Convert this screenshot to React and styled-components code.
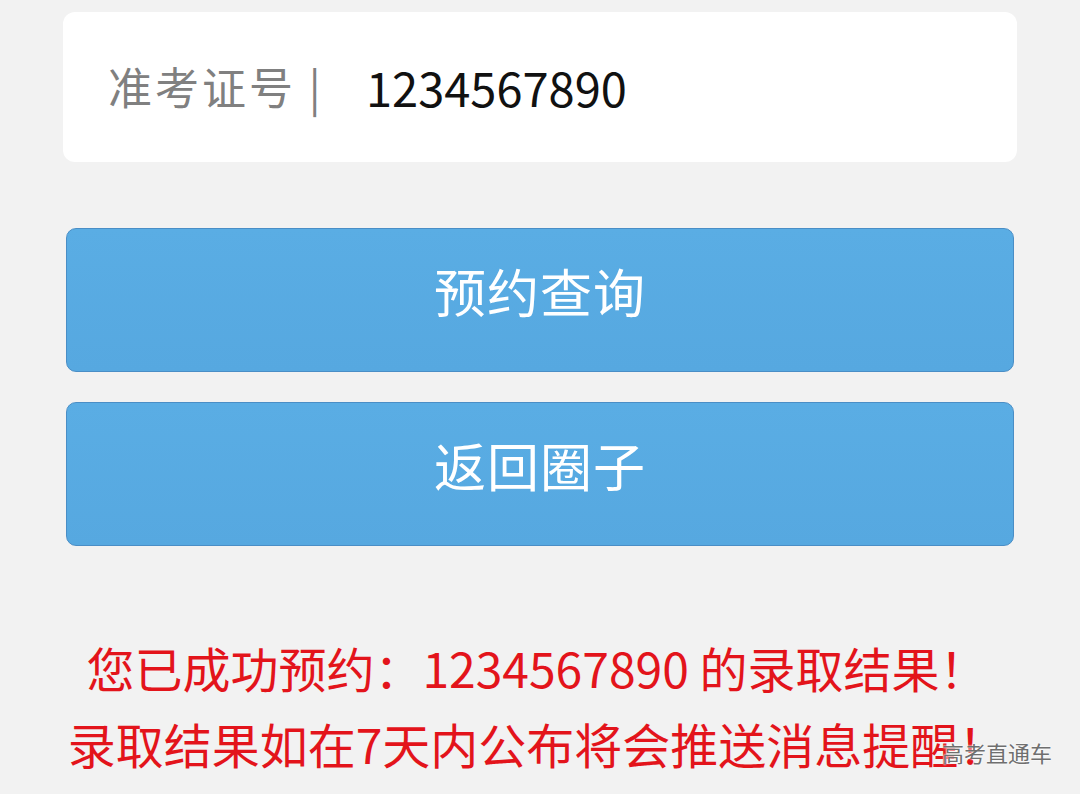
import React from 'react';
import styled, { createGlobalStyle } from 'styled-components';

const GlobalStyle = createGlobalStyle`
  html, body {
    margin: 0;
    padding: 0;
    background: #f2f2f2;
  }
  body {
    font-family: 'Noto Sans CJK SC', 'Noto Sans', sans-serif;
  }
`;

const Page = styled.div`
  position: relative;
  width: 1080px;
  height: 794px;
  overflow: hidden;
  background: #f2f2f2;
  padding-top: 12px;
  box-sizing: border-box;
`;

const InputCard = styled.div`
  margin: 0 63px;
  height: 150px;
  background: #ffffff;
  border-radius: 12px;
  display: flex;
  align-items: center;
  padding-left: 45px;
  padding-bottom: 2px;
  box-sizing: border-box;
`;

const Label = styled.span`
  font-size: 44px;
  color: #808080;
  width: 258px;
  flex-shrink: 0;
  letter-spacing: 3px;
`;

const Value = styled.span`
  font-size: 47px;
  color: #111111;
`;

const Buttons = styled.div`
  margin: 66px 66px 0;
  display: flex;
  flex-direction: column;
  gap: 30px;
`;

const Button = styled.button`
  height: 144px;
  width: 100%;
  padding: 0 0 20px;
  border: 1px solid #4a8ec6;
  border-radius: 10px;
  background: linear-gradient(#5aade4, #56a8e0);
  color: #ffffff;
  font-family: 'Noto Sans CJK SC', sans-serif;
  font-size: 52px;
  letter-spacing: 1px;
  cursor: pointer;
`;

const Notice = styled.div`
  margin-top: 83px;
  padding-right: 6px;
  text-align: center;
  color: #e3141b;
  font-size: 48px;
  line-height: 76px;
  white-space: nowrap;
`;

const NoticeLine = styled.div``;

const Watermark = styled.div`
  position: absolute;
  right: 28px;
  bottom: 26px;
  font-size: 22px;
  color: #6f6f6f;
  text-shadow: 0 0 2px #ffffff, 0 0 2px #ffffff;
`;

export default function App() {
  return (
    <Page>
      <GlobalStyle />
      <InputCard>
        <Label>准考证号 |</Label>
        <Value>1234567890</Value>
      </InputCard>
      <Buttons>
        <Button>预约查询</Button>
        <Button>返回圈子</Button>
      </Buttons>
      <Notice>
        <NoticeLine>您已成功预约：1234567890 的录取结果！</NoticeLine>
        <NoticeLine>录取结果如在7天内公布将会推送消息提醒！</NoticeLine>
      </Notice>
      <Watermark>高考直通车</Watermark>
    </Page>
  );
}
